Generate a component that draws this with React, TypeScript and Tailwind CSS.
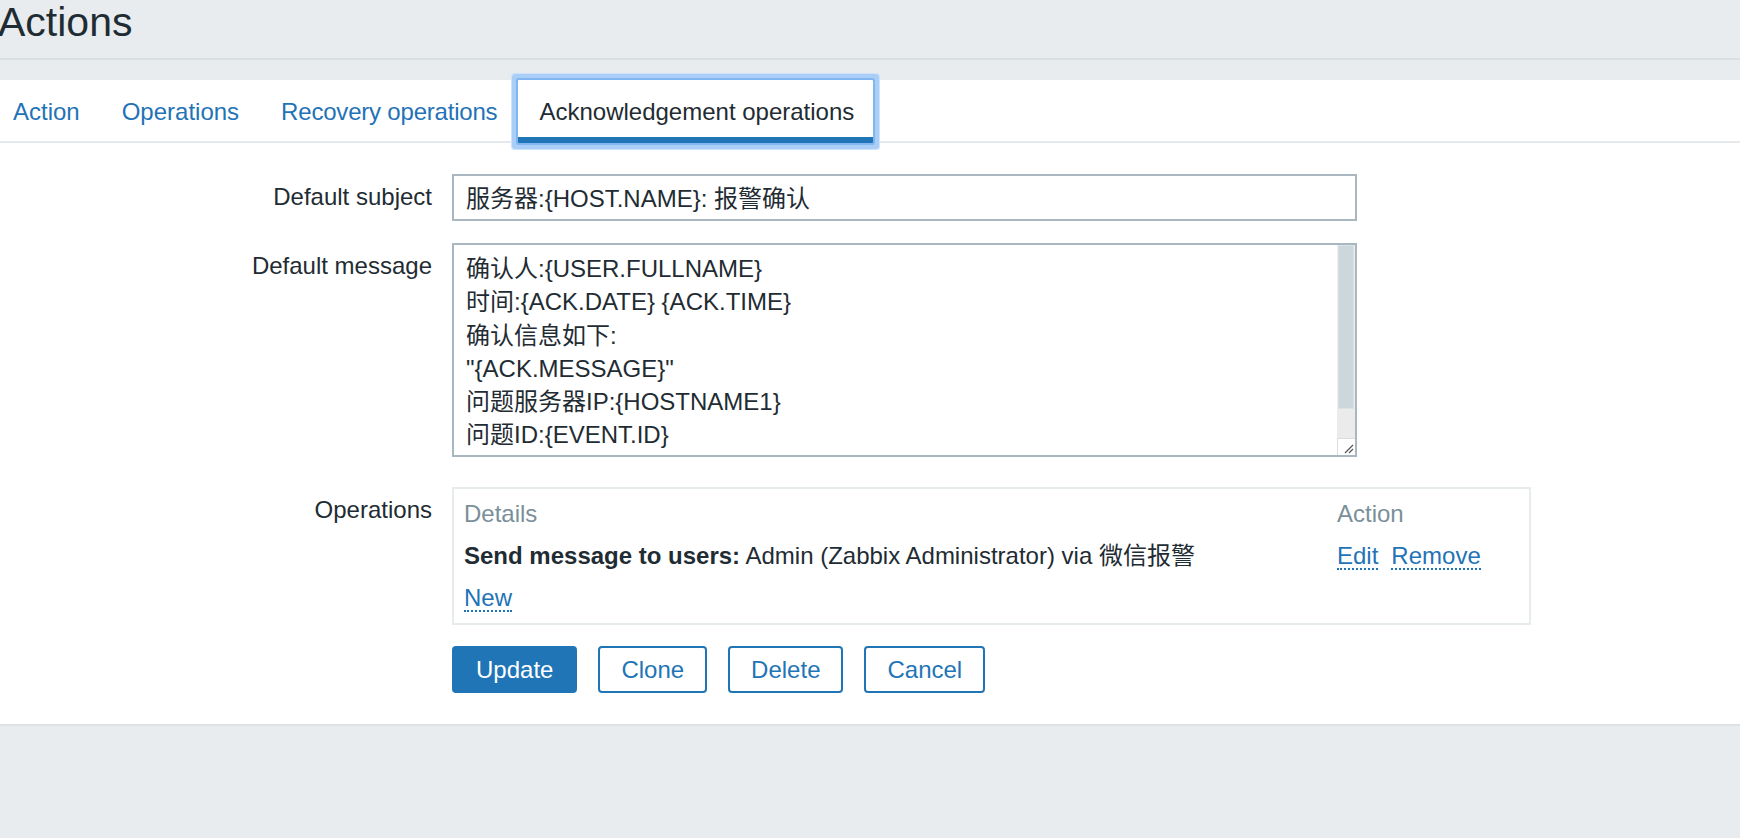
const lines = [
  "确认人:{USER.FULLNAME}",
  "时间:{ACK.DATE} {ACK.TIME}",
  "确认信息如下:",
  "\"{ACK.MESSAGE}\"",
  "问题服务器IP:{HOSTNAME1}",
  "问题ID:{EVENT.ID}",
];

const FormRow = ({ label, children, className = "" }: { label: string; children: React.ReactNode; className?: string }) => (
  <div className={`flex ${className}`}>
    <div className="h-[28px] w-[432px] shrink-0 pt-[9px] text-right leading-[28px] box-content">{label}</div>
    <div className="ml-[20px]">{children}</div>
  </div>
);

const DotLink = ({ children }: { children: React.ReactNode }) => (
  <span className="h-[28px] border-b-2 border-dotted border-[#1f73b6] text-[#1f73b6]">{children}</span>
);

export default function App() {
  return (
    <div className="min-h-screen w-full overflow-hidden bg-[#e8ecef] font-['Liberation_Sans','Noto_Sans_CJK_SC',sans-serif] text-[24px] text-[#1f2c33]">
      <header className="h-[58px] overflow-hidden">
        <h1 className="-ml-[2px] pt-[2px] text-[41px] leading-[40px]">Actions</h1>
      </header>
      <div className="h-[2px] bg-[#dadfe2]" />
      <div className="h-[20px]" />

      <main className="border-b-2 border-[#dde3e4] bg-white pb-[31px]">
        {/* tabs */}
        <ul className="flex h-[63px] border-b-2 border-[#e6e9ec] leading-[28px]">
          <li className="-ml-[8px] h-[61px] px-[21px] pt-[18px] text-[#1f73b6]">Action</li>
          <li className="h-[61px] px-[21px] pt-[18px] text-[#1f73b6]">Operations</li>
          <li className="h-[61px] px-[21px] pt-[18px] tracking-[-0.2px] text-[#1f73b6]">Recovery operations</li>
          <li className="relative h-[63px] rounded-[1px] border-b-[6px] border-[#1f75b6] bg-white pl-[21px] pr-[19px] pt-[18px] shadow-[0_0_0_2px_#82b6f0,0_0_0_6px_#a9cef7,0_0_0_7px_#cfe3fa]">
            Acknowledgement operations
          </li>
        </ul>

        <FormRow label="Default subject" className="mt-[31px]">
          <div className="h-[47px] w-[905px] overflow-hidden border-2 border-[#a9b7c0] px-[12px] pt-[3px] leading-[40px]">
            服务器:{"{HOST.NAME}"}: 报警确认
          </div>
        </FormRow>

        <FormRow label="Default message" className="mt-[22px]">
          <div className="flex h-[214px] w-[905px] border-2 border-[#a9b7c0]">
            <div className="flex-1 overflow-hidden whitespace-pre pl-[12px] pt-[7px]">
              {lines.map((l) => (
                <div key={l} className="h-[33.3px] leading-[33.3px]">{l}</div>
              ))}
            </div>
            <div className="flex w-[18px] flex-col bg-[#ebebeb]">
              <div className="mx-[1px] h-[164px] border border-[#dbe2e6] bg-[#cbd6dd]" />
              <div className="flex-1" />
              <div className="relative h-[17px] border-l border-t border-[#dcdcdc] bg-white">
                <svg className="absolute bottom-[1px] right-[1px]" width="12" height="12" viewBox="0 0 12 12">
                  <path d="M11 3 L3 11 M11 7 L7 11" stroke="#555" strokeWidth="1.2" />
                </svg>
              </div>
            </div>
          </div>
        </FormRow>

        <FormRow label="Operations" className="mt-[30px]">
          <div className="grid h-[138px] w-[1079px] grid-cols-[873px_1fr] grid-rows-[28px_28px_28px] gap-y-[14px] border-2 border-[#e6ebee] pb-[11px] pl-[10px] pr-[8px] pt-[11px] leading-[28px]">
            <div className="h-[28px] text-[#7a8f9a]">Details</div>
            <div className="h-[28px] text-[#7a8f9a]">Action</div>
            <div className="h-[28px] whitespace-nowrap">
              <span className="font-bold">Send message to users:</span> Admin (Zabbix Administrator) via 微信报警
            </div>
            <div className="flex h-[28px] gap-[13px]">
              <DotLink>Edit</DotLink>
              <DotLink>Remove</DotLink>
            </div>
            <div className="flex h-[28px]">
              <DotLink>New</DotLink>
            </div>
            <div />
          </div>
        </FormRow>

        <div className="ml-[452px] mt-[21px] flex gap-[21px]">
          <button className="h-[47px] rounded-[4px] border-2 border-[#1f75b6] bg-[#1f75b6] px-[22px] text-white">Update</button>
          <button className="h-[47px] rounded-[4px] border-2 border-[#1f75b6] bg-white px-[21px] text-[#1f75b6]">Clone</button>
          <button className="h-[47px] rounded-[4px] border-2 border-[#1f75b6] bg-white px-[21px] text-[#1f75b6]">Delete</button>
          <button className="h-[47px] rounded-[4px] border-2 border-[#1f75b6] bg-white px-[21px] text-[#1f75b6]">Cancel</button>
        </div>
      </main>
    </div>
  );
}
